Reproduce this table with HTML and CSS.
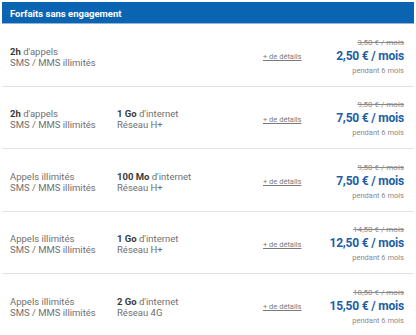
FILE: index.html
```html
<!DOCTYPE html>
<html lang="fr">
<head>
<meta charset="utf-8">
<title>Forfaits sans engagement</title>
<link rel="stylesheet" href="styles.css">
</head>
<body>
<div class="panel">
  <div class="head">Forfaits sans engagement</div>
  <div class="row">
    <div class="col c1"><div><b>2h</b> d'appels</div><div>SMS / MMS illimités</div></div>
    <div class="col c2"></div>
    <a class="more" href="#">+ de détails</a>
    <div class="price"><s class="old">3,50 € / mois</s><div class="now">2,50 € / mois</div><div class="dur">pendant 6 mois</div></div>
  </div>
  <div class="row">
    <div class="col c1"><div><b>2h</b> d'appels</div><div>SMS / MMS illimités</div></div>
    <div class="col c2"><div><b>1 Go</b> d'internet</div><div>Réseau H+</div></div>
    <a class="more" href="#">+ de détails</a>
    <div class="price"><s class="old">9,50 € / mois</s><div class="now">7,50 € / mois</div><div class="dur">pendant 6 mois</div></div>
  </div>
  <div class="row">
    <div class="col c1"><div>Appels illimités</div><div>SMS / MMS illimités</div></div>
    <div class="col c2"><div><b>100 Mo</b> d'internet</div><div>Réseau H+</div></div>
    <a class="more" href="#">+ de détails</a>
    <div class="price"><s class="old">9,50 € / mois</s><div class="now">7,50 € / mois</div><div class="dur">pendant 6 mois</div></div>
  </div>
  <div class="row">
    <div class="col c1"><div>Appels illimités</div><div>SMS / MMS illimités</div></div>
    <div class="col c2"><div><b>1 Go</b> d'internet</div><div>Réseau H+</div></div>
    <a class="more" href="#">+ de détails</a>
    <div class="price"><s class="old">14,50 € / mois</s><div class="now">12,50 € / mois</div><div class="dur">pendant 6 mois</div></div>
  </div>
  <div class="row">
    <div class="col c1"><div>Appels illimités</div><div>SMS / MMS illimités</div></div>
    <div class="col c2"><div><b>2 Go</b> d'internet</div><div>Réseau 4G</div></div>
    <a class="more" href="#">+ de détails</a>
    <div class="price"><s class="old">18,50 € / mois</s><div class="now">15,50 € / mois</div><div class="dur">pendant 6 mois</div></div>
  </div>
</div>
</body>
</html>
```
FILE: styles.css
```css
html, body { margin: 0; padding: 0; background: #fff; }
body { font-family: Roboto, "Noto Sans", sans-serif; color: #707070; }
.panel { margin: 2px 2px 0 2px; }
.head {
  height: 22px;
  background: #0a64b2;
  border-bottom: 1px solid #8fb6dc;
  box-sizing: border-box;
  color: #fff;
  font-weight: 700;
  font-size: 9.5px;
  line-height: 23px;
  padding-left: 8px;
}
.row {
  display: flex;
  align-items: center;
  height: 62.5px;
  box-sizing: border-box;
  border-bottom: 1px solid #e2e2e2;
  padding: 4px 10px 0 8px;
  font-size: 9.5px;
  line-height: 11px;
}
.col b { color: #3a3a3a; font-weight: 700; }
.c1 { width: 107px; }
.c2 { width: 146px; }
.more { color: #7a7a7a; font-size: 7.5px; text-decoration: underline; width: 40px; }
.price { margin-left: auto; text-align: right; display: flex; flex-direction: column; align-items: flex-end; padding-top: 1px; }
.old { color: #8a8a8a; font-size: 8px; line-height: 10px; text-decoration: line-through; }
.now { color: #1b5ea6; font-weight: 700; font-size: 12px; line-height: 16px; letter-spacing: -0.2px; }
.dur { color: #8a8a8a; font-size: 7.5px; line-height: 12px; margin-top: 1px; }
```
